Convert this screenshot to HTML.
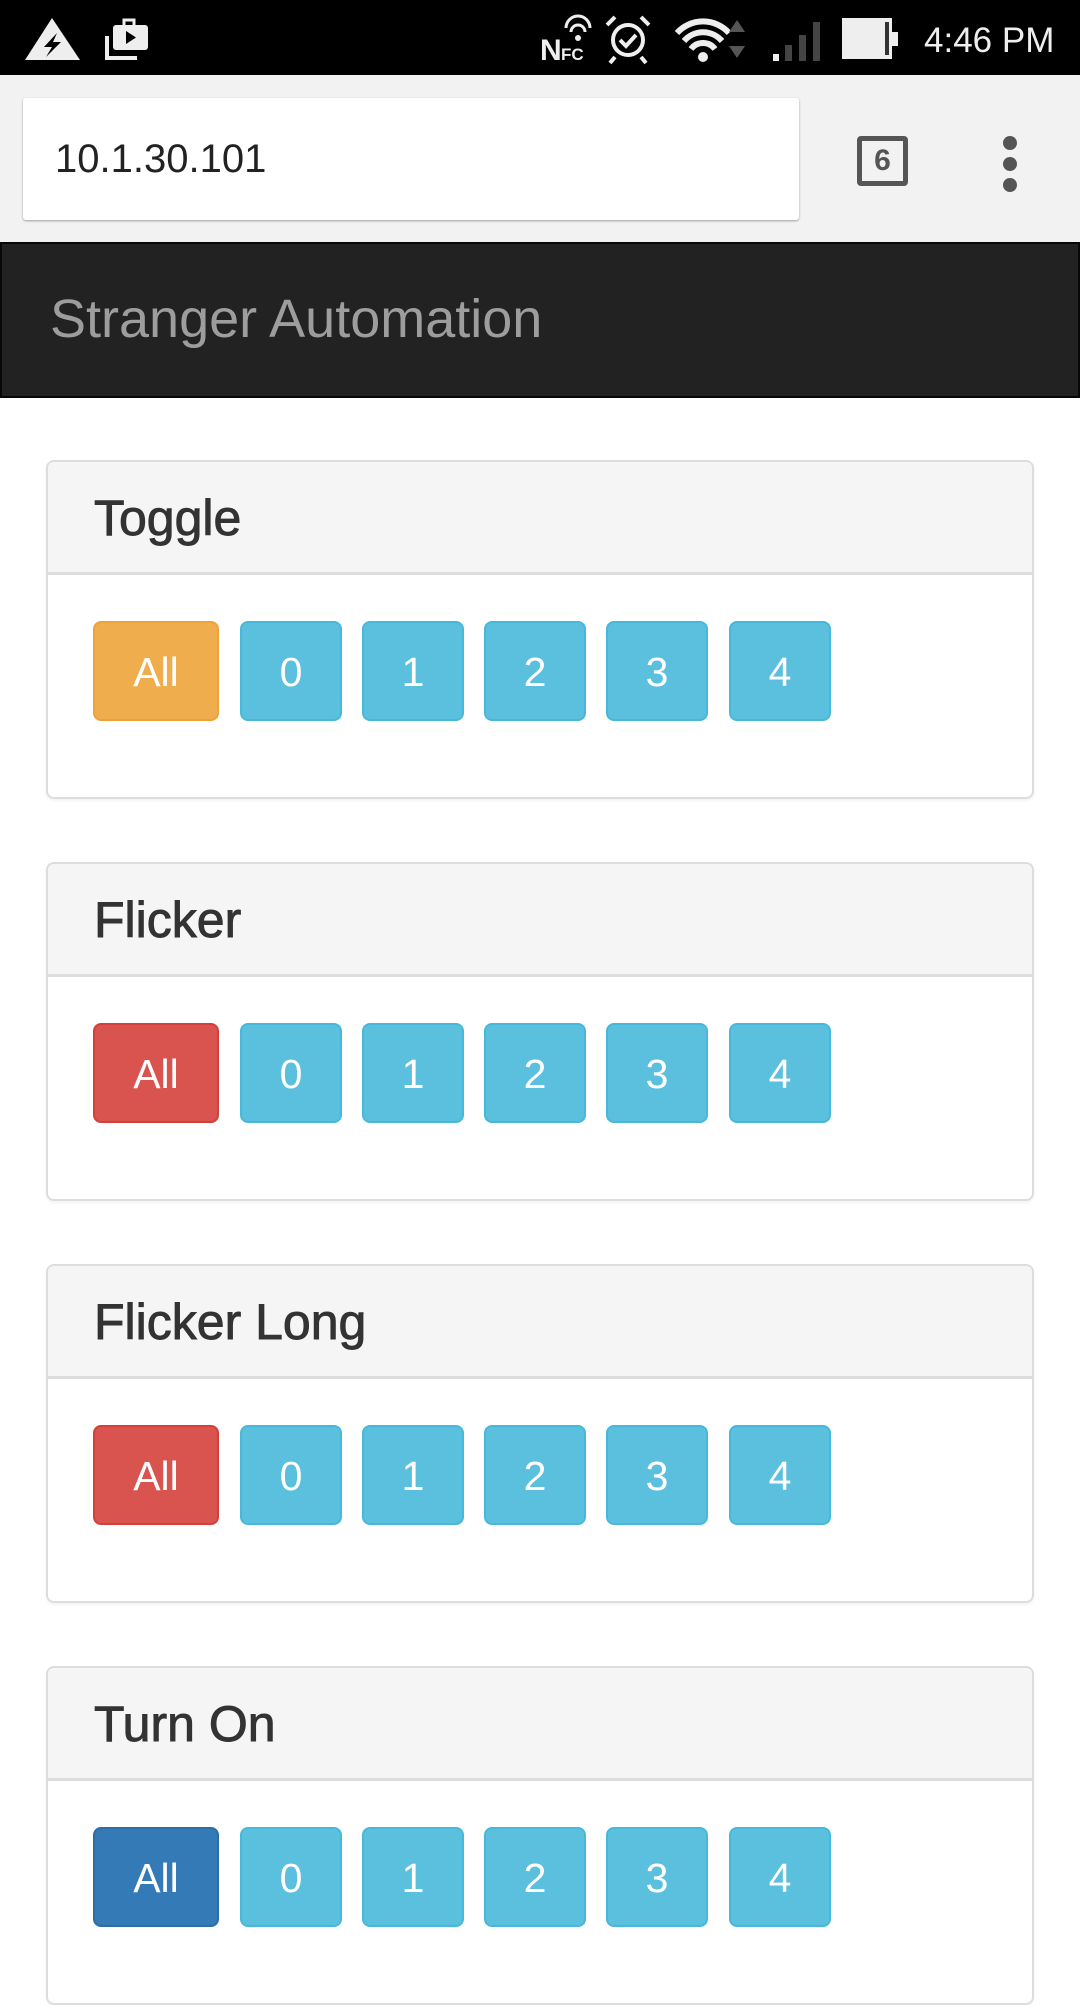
<!DOCTYPE html>
<html><head><meta charset="utf-8"><style>
*{margin:0;padding:0;box-sizing:border-box}
body{width:1080px;height:1920px;overflow:hidden;background:#fff;font-family:"Liberation Sans",sans-serif;position:relative}
.abs{position:absolute}
.status{left:0;top:0;width:1080px;height:75px;background:#000}
.chrome{left:0;top:75px;width:1080px;height:167px;background:#f2f2f2}
.url{left:23px;top:98px;width:776px;height:122px;background:#fff;border-radius:3px;box-shadow:0 1px 2px rgba(0,0,0,.35);font-size:40px;color:#222;padding-left:32px;line-height:122px}
.nav{left:0;top:242px;width:1080px;height:156px;background:#222;border:2px solid #080808}
.brand{left:48px;top:0;line-height:150px;font-size:54px;color:#9d9d9d}
.card{left:46px;width:988px;height:339px;border:2px solid #ddd;border-radius:8px;box-shadow:0 2px 3px rgba(0,0,0,.05);overflow:hidden}
.hd{height:113px;background:#f5f5f5;border-bottom:3px solid #ddd;font-size:50px;color:#333;padding-left:46px;line-height:112px;-webkit-text-stroke:0.9px #333}
.btn{position:absolute;top:159px;height:100px;border-radius:8px;color:#fff;font-size:41px;text-align:center;line-height:98px;border:2px solid}
.i{background:#5bc0de;border-color:#46b8da}
</style></head><body>
<div class="abs status">
<svg width="1080" height="75" style="position:absolute;left:0;top:0">
<polygon points="52,18 80,60 25,60" fill="#eee"/>
<polygon points="57,33 44,47 52,47 46,57 61,42 53,42" fill="#000"/>
<rect x="113" y="25" width="35" height="25" rx="3" fill="#eee"/>
<path d="M124 25 v-5 h10 v5" stroke="#eee" stroke-width="3" fill="none"/>
<polygon points="126,31 126,44 136,37.5" fill="#000"/>
<path d="M107 36 v22 h30" stroke="#eee" stroke-width="4" fill="none"/>
<text x="540" y="60" font-size="30" font-weight="bold" fill="#eee" font-family="Liberation Sans">N</text>
<text x="561" y="60" font-size="17" font-weight="bold" fill="#eee" font-family="Liberation Sans">FC</text>
<path d="M566 28 a12 12 0 0 1 24 0 M571 32 a7 7 0 0 1 14 0" stroke="#eee" stroke-width="3" fill="none"/>
<circle cx="578" cy="38" r="3" fill="#eee"/>
<circle cx="628" cy="40" r="15" stroke="#eee" stroke-width="4" fill="none"/>
<path d="M620 40 l6 6 l10 -11" stroke="#eee" stroke-width="4" fill="none"/>
<path d="M607 25 l8 -8 M649 25 l-8 -8 M615 57 l-5 6 M641 57 l5 6" stroke="#eee" stroke-width="4"/>
<path d="M677 33 a35 35 0 0 1 52 0 M684 41 a25 25 0 0 1 38 0 M691 49 a15 15 0 0 1 24 0" stroke="#eee" stroke-width="6" fill="none"/>
<circle cx="703" cy="57" r="5" fill="#eee"/>
<polygon points="737,20 745,32 729,32" fill="#555"/><polygon points="737,58 745,46 729,46" fill="#555"/>
<rect x="773" y="54" width="6" height="7" fill="#eee"/>
<rect x="785" y="45" width="7" height="16" fill="#444"/><rect x="799" y="35" width="7" height="26" fill="#444"/><rect x="813" y="22" width="7" height="39" fill="#444"/>
<rect x="842" y="18" width="50" height="41" fill="#eee"/><rect x="885" y="22" width="4" height="33" fill="#333"/><rect x="892" y="32" width="6" height="14" fill="#eee"/>
<text x="924" y="52" font-size="35" fill="#eee" font-family="Liberation Sans">4:46 PM</text>
</svg></div>
<div class="abs chrome"></div>
<div class="abs url">10.1.30.101</div>
<div class="abs" style="left:857px;top:136px;width:51px;height:50px;border:5px solid #555;border-radius:4px;font-size:30px;font-weight:bold;color:#555;text-align:center;line-height:40px">6</div>
<div class="abs" style="left:1003px;top:136px;width:14px;height:14px;border-radius:50%;background:#555"></div>
<div class="abs" style="left:1003px;top:157px;width:14px;height:14px;border-radius:50%;background:#555"></div>
<div class="abs" style="left:1003px;top:178px;width:14px;height:14px;border-radius:50%;background:#555"></div>
<div class="abs nav"><div class="abs brand">Stranger Automation</div></div>

<div class="abs card" style="top:460px"><div class="hd">Toggle</div>
<div class="btn" style="left:45px;width:126px;background:#f0ad4e;border-color:#eea236">All</div>
<div class="btn i" style="left:192px;width:102px">0</div><div class="btn i" style="left:314px;width:102px">1</div><div class="btn i" style="left:436px;width:102px">2</div><div class="btn i" style="left:558px;width:102px">3</div><div class="btn i" style="left:681px;width:102px">4</div></div>

<div class="abs card" style="top:862px"><div class="hd">Flicker</div>
<div class="btn" style="left:45px;width:126px;background:#d9534f;border-color:#d43f3a">All</div>
<div class="btn i" style="left:192px;width:102px">0</div><div class="btn i" style="left:314px;width:102px">1</div><div class="btn i" style="left:436px;width:102px">2</div><div class="btn i" style="left:558px;width:102px">3</div><div class="btn i" style="left:681px;width:102px">4</div></div>

<div class="abs card" style="top:1264px"><div class="hd">Flicker Long</div>
<div class="btn" style="left:45px;width:126px;background:#d9534f;border-color:#d43f3a">All</div>
<div class="btn i" style="left:192px;width:102px">0</div><div class="btn i" style="left:314px;width:102px">1</div><div class="btn i" style="left:436px;width:102px">2</div><div class="btn i" style="left:558px;width:102px">3</div><div class="btn i" style="left:681px;width:102px">4</div></div>

<div class="abs card" style="top:1666px"><div class="hd">Turn On</div>
<div class="btn" style="left:45px;width:126px;background:#337ab7;border-color:#2e6da4">All</div>
<div class="btn i" style="left:192px;width:102px">0</div><div class="btn i" style="left:314px;width:102px">1</div><div class="btn i" style="left:436px;width:102px">2</div><div class="btn i" style="left:558px;width:102px">3</div><div class="btn i" style="left:681px;width:102px">4</div></div>
</body></html>
